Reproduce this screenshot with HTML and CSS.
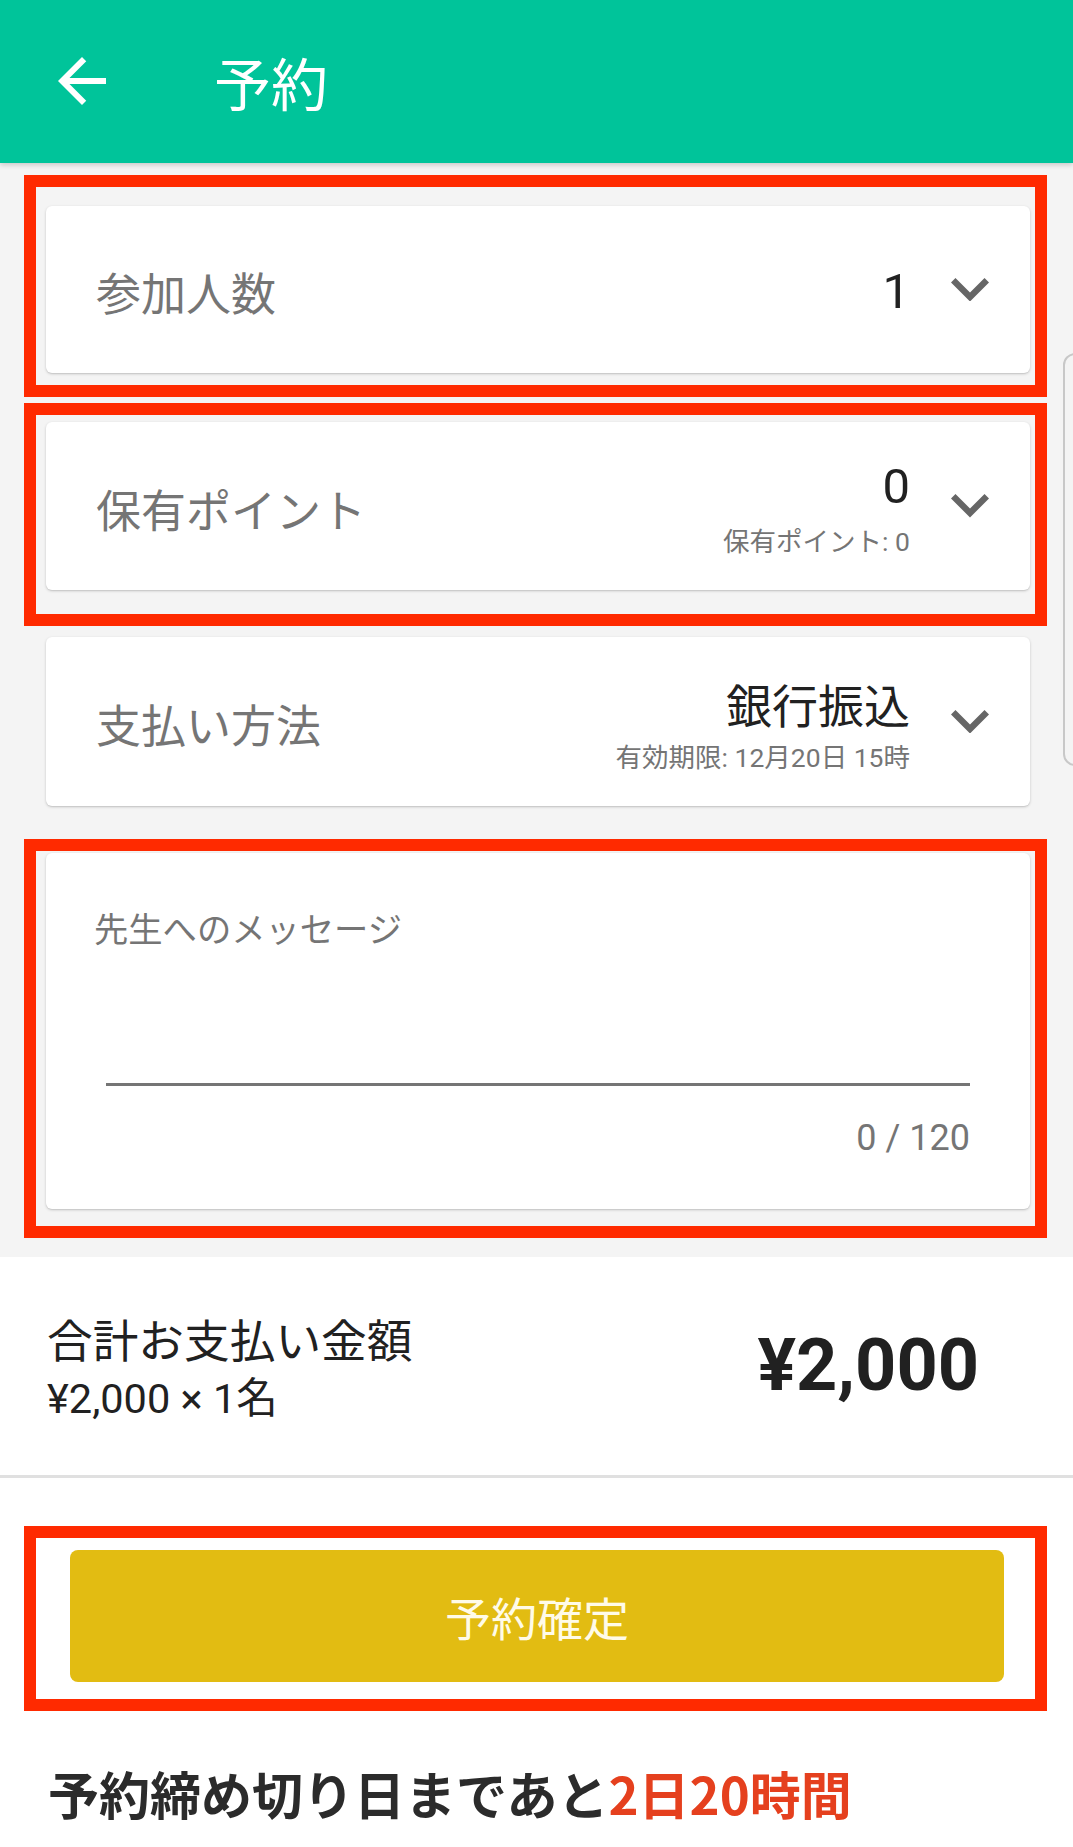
FILE: index.html
```html
<!DOCTYPE html>
<html lang="ja">
<head>
<meta charset="utf-8">
<title>予約</title>
<link rel="stylesheet" href="styles.css">
</head>
<body>
<header class="appbar">
  <svg class="back" viewBox="0 0 24 24" aria-hidden="true"><path d="M20 11H7.83l5.59-5.59L12 4l-8 8 8 8 1.41-1.41L7.83 13H20v-2z"/></svg>
  <h1 class="title">予約</h1>
</header>

<main class="form">
  <div class="mark mark-1">
    <div class="card row">
      <span class="label">参加人数</span>
      <div class="value-col"><div class="value num">1</div></div>
      <svg class="chev" viewBox="6 8.59 12 7.41" aria-hidden="true"><path d="M16.59 8.59L12 13.17 7.41 8.59 6 10l6 6 6-6z"/></svg>
    </div>
  </div>

  <div class="mark mark-2">
    <div class="card row">
      <span class="label">保有ポイント</span>
      <div class="value-col">
        <div class="value num">0</div>
        <div class="sub">保有ポイント: 0</div>
      </div>
      <svg class="chev" viewBox="6 8.59 12 7.41" aria-hidden="true"><path d="M16.59 8.59L12 13.17 7.41 8.59 6 10l6 6 6-6z"/></svg>
    </div>
  </div>

  <div class="plain">
    <div class="card row row-3">
      <span class="label">支払い方法</span>
      <div class="value-col">
        <div class="value">銀行振込</div>
        <div class="sub">有効期限: 12月20日 15時</div>
      </div>
      <svg class="chev" viewBox="6 8.59 12 7.41" aria-hidden="true"><path d="M16.59 8.59L12 13.17 7.41 8.59 6 10l6 6 6-6z"/></svg>
    </div>
  </div>

  <div class="mark mark-4">
    <div class="card msg">
      <div class="msg-label">先生へのメッセージ</div>
      <div class="msg-field"></div>
      <div class="counter">0 / 120</div>
    </div>
  </div>
</main>

<section class="total">
  <div class="total-left">
    <div class="total-title">合計お支払い金額</div>
    <div class="total-calc">¥2,000 × 1名</div>
  </div>
  <div class="total-price">¥2,000</div>
</section>

<section class="action">
  <div class="mark mark-btn">
    <button class="confirm" type="button">予約確定</button>
  </div>
  <p class="deadline">予約締め切り日まであと<span class="remain">2日20時間</span></p>
</section>

<div class="edge-handle" aria-hidden="true"></div>
</body>
</html>
```

FILE: styles.css
```css
* { box-sizing: border-box; }

html, body {
  margin: 0;
  padding: 0;
  background: #ffffff;
  font-family: Roboto, "Noto Sans CJK JP", "Noto Sans", sans-serif;
  color: #212121;
}

body { position: relative; overflow-x: hidden; }

/* App bar */
.appbar {
  height: 163px;
  background: #00c49a;
  display: flex;
  align-items: center;
  box-shadow: 0 2px 5px rgba(0, 0, 0, 0.18);
  position: relative;
  z-index: 2;
}
.back {
  width: 72px;
  height: 72px;
  fill: #ffffff;
  margin-left: 46px;
  margin-top: -2px;
}
.title {
  margin: 0 0 0 96px;
  font-family: "Noto Sans CJK JP", sans-serif;
  font-weight: 400;
  font-size: 57px;
  line-height: 1;
  color: #ffffff;
  letter-spacing: 0;
}

/* Form area */
.form {
  background: #f4f4f4;
  padding: 12px 0 19px;
}

.mark {
  border: 12px solid #ff2a00;
  margin-left: 24px;
  width: 1023px;
  padding-left: 10px;
  padding-right: 5px;
}
.mark-1 { padding-top: 19px; padding-bottom: 12px; }
.mark-2 { margin-top: 6px; padding-top: 7px; padding-bottom: 24px; }
.mark-4 { margin-top: 33px; padding-top: 2px; padding-bottom: 17px; }

.plain {
  margin-top: 11px;
  padding-left: 46px;
  padding-right: 43px;
}

.card {
  background: #ffffff;
  border-radius: 6px;
  box-shadow: 0 1px 3px rgba(0, 0, 0, 0.18), 0 1px 1px rgba(0, 0, 0, 0.06);
}

.row {
  height: 167px;
  display: flex;
  align-items: center;
  padding: 0 41px 0 50px;
}
.mark-2 .row { height: 168px; }
.row-3 { height: 169px; }

.label {
  flex: 1;
  font-family: "Noto Sans CJK JP", sans-serif;
  font-size: 45px;
  line-height: 1;
  color: #757575;
  margin-top: 4px;
}

.value-col {
  text-align: right;
  margin-top: 4px;
}
.value {
  font-family: "Noto Sans CJK JP", sans-serif;
  font-size: 46px;
  line-height: 56px;
  color: #212121;
}
.value.num {
  font-family: Roboto, sans-serif;
  font-size: 49px;
}
.sub {
  font-family: Roboto, "Noto Sans CJK JP", sans-serif;
  font-size: 26.5px;
  line-height: 30px;
  color: #757575;
  margin-top: 12px;
}

.chev {
  width: 38px;
  height: 23.5px;
  margin-left: 41px;
  fill: #666666;
  flex: none;
}

/* Message card */
.msg {
  height: 356px;
  padding: 54px 60px 0 48px;
}
.msg-label {
  font-family: "Noto Sans CJK JP", sans-serif;
  font-size: 34.3px;
  line-height: 40px;
  color: #757575;
}
.msg-field {
  height: 139px;
  margin-left: 12px;
  border-bottom: 3px solid #757575;
}
.counter {
  margin-top: 30px;
  text-align: right;
  font-family: Roboto, sans-serif;
  font-size: 36px;
  line-height: 44px;
  color: #757575;
}

/* Total */
.total {
  height: 221px;
  display: flex;
  align-items: center;
  justify-content: space-between;
  padding: 0 94px 0 47px;
  border-bottom: 3px solid #e0e0e0;
}
.total-title {
  font-family: "Noto Sans CJK JP", sans-serif;
  font-size: 45.7px;
  line-height: 56px;
  color: #212121;
}
.total-calc {
  font-family: Roboto, "Noto Sans CJK JP", sans-serif;
  font-size: 41.5px;
  line-height: 46px;
  color: #212121;
  margin-top: 10px;
}
.total-price {
  font-family: Roboto, sans-serif;
  font-weight: 700;
  font-size: 72px;
  line-height: 1;
  color: #212121;
}

/* Action */
.action {
  padding-top: 48px;
}
.mark-btn {
  padding: 12px 31px 17px 34px;
}
.confirm {
  display: block;
  width: 100%;
  height: 132px;
  border: 0;
  border-radius: 8px;
  background: #e2bc12;
  color: #fffbe8;
  font-family: "Noto Sans CJK JP", sans-serif;
  font-size: 46px;
  line-height: 1;
  padding: 0;
}
.deadline {
  margin: 52px 0 0 48px;
  font-family: "Noto Sans CJK JP", sans-serif;
  font-weight: 700;
  font-size: 51px;
  line-height: 60px;
  color: #2b2b2b;
  letter-spacing: 0;
}
.remain {
  color: #e5401e;
}

/* Edge panel handle (overlay on right screen edge) */
.edge-handle {
  position: absolute;
  top: 353px;
  right: -14px;
  width: 24px;
  height: 413px;
  border: 2px solid #c8c8c8;
  border-radius: 14px;
  background: transparent;
}
```
